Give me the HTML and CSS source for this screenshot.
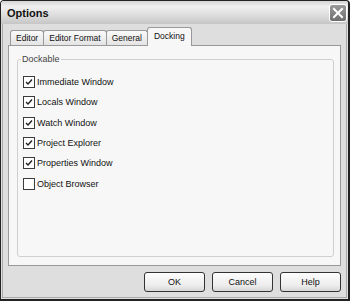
FILE: index.html
```html
<!DOCTYPE html>
<html lang="en">

<head>
    <meta charset="UTF-8">
    <meta name="viewport" content="width=device-width, initial-scale=1.0">
    <title>Options</title>
    <link rel="stylesheet" href="styles.css">
</head>

<body>
    <div class="window">
        <!-- Title Bar -->
        <div class="titlebar">
            <span class="title">Options</span>
            <span class="close">
                <svg width="12" height="12" viewBox="0 0 12 12">
                    <path d="M2 2 L10 10 M10 2 L2 10" stroke="#fff" stroke-width="2" stroke-linecap="square" />
                </svg>
            </span>
        </div>

        <div class="content">
            <!-- Tabs -->
            <div class="tabs">
                <div class="tab">Editor</div>
                <div class="tab">Editor Format</div>
                <div class="tab">General</div>
                <div class="tab active">Docking</div>
            </div>

            <!-- Docking Panel -->
            <div class="panel">
                <fieldset class="group">
                    <legend>Dockable</legend>
                    <ul class="checks">
                        <li><span class="box checked"></span>Immediate Window</li>
                        <li><span class="box checked"></span>Locals Window</li>
                        <li><span class="box checked"></span>Watch Window</li>
                        <li><span class="box checked"></span>Project Explorer</li>
                        <li><span class="box checked"></span>Properties Window</li>
                        <li><span class="box"></span>Object Browser</li>
                    </ul>
                </fieldset>
            </div>

            <!-- Dialog Buttons -->
            <div class="buttons">
                <button>OK</button>
                <button>Cancel</button>
                <button>Help</button>
            </div>
        </div>
    </div>
</body>

</html>
```

FILE: styles.css
```css
body {
    margin: 0;
    font-family: "Liberation Sans", Arial, sans-serif;
    font-size: 9px;
    color: #111;
    background: #fff;
}

.window {
    width: 350px;
    height: 301px;
    box-sizing: border-box;
    border: 1px solid #222;
    border-right-width: 2px;
    border-bottom-width: 2px;
    border-radius: 4px 4px 0 0;
    background: #dedede;
    display: flex;
    flex-direction: column;
    overflow: hidden;
}

.titlebar {
    height: 23px;
    display: flex;
    justify-content: space-between;
    align-items: center;
    padding: 0 1px 0 6px;
    background: linear-gradient(#d6d6d6, #f0f0f0 25%, #d8d8d8 70%, #c6c6c6);
}

.title {
    font-size: 11px;
    font-weight: bold;
    color: #111;
}

.close {
    width: 18px;
    height: 18px;
    box-sizing: border-box;
    border: 1px solid #fff;
    border-radius: 3px;
    background: linear-gradient(#9a9a9a, #6e6e6e);
    display: flex;
    align-items: center;
    justify-content: center;
}

.content {
    flex: 1;
    display: flex;
    flex-direction: column;
    padding: 4px 5px 0 5px;
    border: 1px solid #aaa;
    border-top: none;
    margin: 0 1px 1px 1px;
}

.tabs {
    display: flex;
    align-items: flex-end;
    padding-left: 2px;
    height: 17px;
}

.tab {
    height: 14px;
    line-height: 14px;
    padding: 0 5px;
    font-size: 8.5px;
    border: 1px solid #999;
    border-bottom: none;
    border-radius: 3px 3px 0 0;
    background: linear-gradient(#fafafa, #e4e4e4);
    margin-right: -1px;
}

.tab.active {
    height: 18px;
    line-height: 16px;
    background: #f7f7f7;
    position: relative;
    z-index: 1;
    margin-bottom: -1px;
    padding: 0 6px;
}

.panel {
    height: 221px;
    box-sizing: border-box;
    border: 1px solid #999;
    background: #f7f7f7;
    padding: 8px 6px 0 8px;
}

.group {
    margin: 0;
    height: 203px;
    box-sizing: border-box;
    border: 1px solid #cfcfcf;
    border-radius: 3px;
    padding: 8px 6px 0 5px;
}

.group legend {
    padding: 0 1px;
    margin-left: -2px;
    color: #444;
}

.checks {
    list-style-type: none;
    margin: 0;
    padding: 0;
}

.checks li {
    display: flex;
    align-items: center;
    height: 20.3px;
}

.box {
    width: 10px;
    height: 10px;
    border: 1px solid #3c3c3c;
    background: #fff;
    margin-right: 2px;
}

.box.checked {
    background: #fff url("data:image/svg+xml,%3Csvg xmlns='http://www.w3.org/2000/svg' width='10' height='10'%3E%3Cpath d='M2 5 L4 7 L8 2.5' fill='none' stroke='%23222' stroke-width='1.4'/%3E%3C/svg%3E") no-repeat;
}

.buttons {
    display: flex;
    justify-content: flex-end;
    gap: 7px;
    margin-top: 6px;
}

.buttons button {
    width: 61px;
    height: 20px;
    font-family: "Liberation Sans", Arial, sans-serif;
    font-size: 9px;
    color: #111;
    border: 1px solid #333;
    border-radius: 3px;
    background: linear-gradient(#fdfdfd, #ececec 70%, #d6d6d6);
    padding: 0;
}
```
